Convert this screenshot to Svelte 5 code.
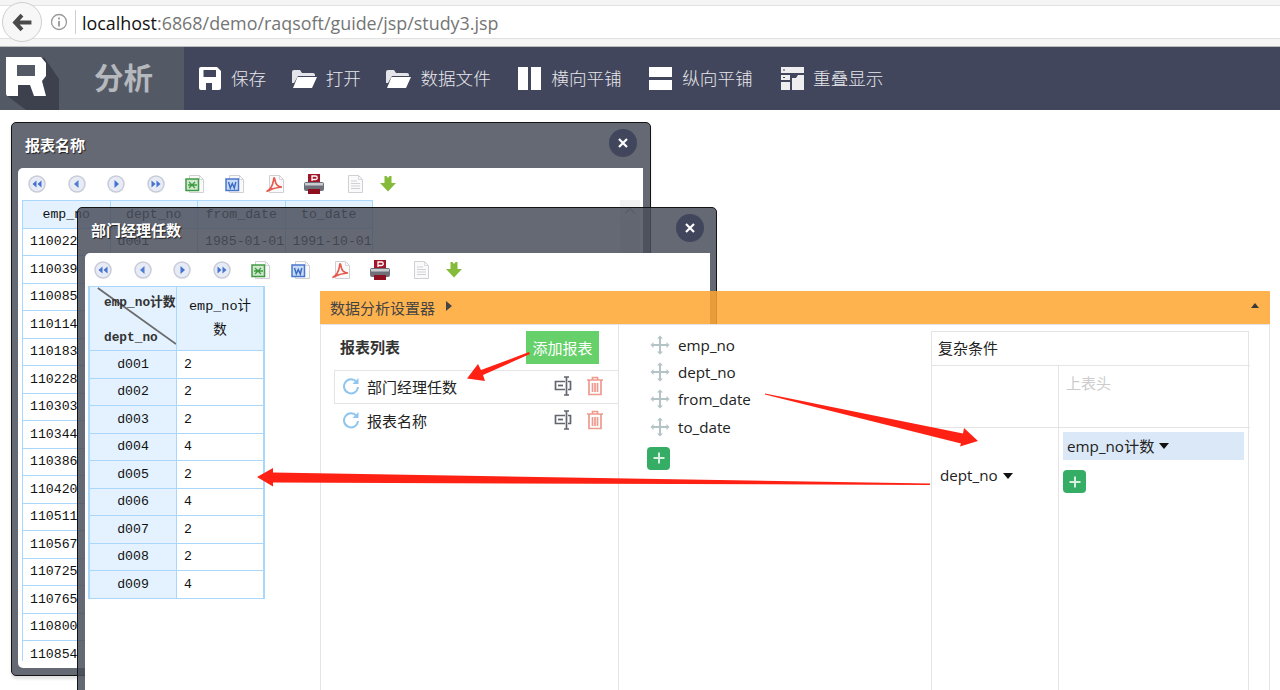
<script>
  const menu = [
    { id: 'save', w: 23, h: 23, label: '保存' },
    { id: 'folder', w: 25, h: 20, label: '打开' },
    { id: 'folder', w: 25, h: 20, label: '数据文件' },
    { id: 'cols', w: 26, h: 24, label: '横向平铺' },
    { id: 'rows', w: 26, h: 24, label: '纵向平铺' },
    { id: 'overlap', w: 26, h: 24, label: '重叠显示' }
  ];
  const empNos = ['110022','110039','110085','110114','110183','110228','110303','110344','110386','110420','110511','110567','110725','110765','110800','110854'];
  const counts = [['d001',2],['d002',2],['d003',2],['d004',4],['d005',2],['d006',4],['d007',2],['d008',2],['d009',4]];
  const fields = ['emp_no','dept_no','from_date','to_date'];
  const reports = [{ name: '部门经理任数', active: true }, { name: '报表名称', active: false }];
</script>

{#snippet roundBtn(kind)}
  <svg class="ti" viewBox="0 0 20 20">
    <circle cx="10" cy="10" r="8" fill="#e6ebf5" stroke="#c9ccd8" stroke-width="1.5"/>
    {#if kind === 'ff'}
      <path d="M9.5 6.5v7L5.5 10zM14.5 6.5v7L10.5 10z" fill="#4573cf"/>
    {:else if kind === 'f'}
      <path d="M11.5 6v8L7 10z" fill="#4f7dd2"/>
    {:else if kind === 'n'}
      <path d="M8.5 6v8l4.500-4z" fill="#4573cf"/>
    {:else}
      <path d="M5.500 6.500v7l4-3.500zM10.500 6.500v7l4-3.500z" fill="#4573cf"/>
    {/if}
  </svg>
{/snippet}

{#snippet page()}
  <path d="M4.500 1.500h10l4 4v13h-14z" fill="#fafafa" stroke="#cfcfd6"/>
  <path d="M14.500 1.500v4h4" fill="none" stroke="#d8d8de"/>
{/snippet}

{#snippet toolbar()}
  <div class="toolbar">
    {@render roundBtn('ff')}
    {@render roundBtn('f')}
    {@render roundBtn('n')}
    {@render roundBtn('nn')}
    <svg class="ti" viewBox="0 0 20 20">
      {@render page()}
      <rect x="1" y="5" width="12.500" height="11.500" fill="#cfe8cf" stroke="#3f9a42" stroke-width="1.500"/>
      <path d="M4 8l6 6M10 8l-6 6M3 11h9" stroke="#3f9a42" stroke-width="1.300"/>
    </svg>
    <svg class="ti" viewBox="0 0 20 20">
      {@render page()}
      <rect x="1" y="5" width="12.500" height="11.500" fill="#c8dcf6" stroke="#4a77cc" stroke-width="1.500"/>
      <path d="M3.500 8l1.800 6 2-4.500 2 4.500 1.500-6" fill="none" stroke="#3a68c4" stroke-width="1.400"/>
    </svg>
    <svg class="ti" viewBox="0 0 20 20">
      {@render page()}
      <path d="M1.500 17.500c3.500-1.500 6-5.500 7-11 0-3.500 1-4 1.500 0 .8 4 3 6.500 7 6.500-4 .5-8 1-11 2.500-1.500.8-3 2-4.500 2z" fill="none" stroke="#e65a50" stroke-width="1.600"/>
    </svg>
    <svg class="ti" viewBox="0 0 20 20">
      <rect x="4" y="0" width="12" height="9" fill="#a2162a"/>
      <path d="M8 7V2h3.500a1.500 1.500 0 0 1 0 3.500H8" fill="none" stroke="#fff" stroke-width="1.300"/>
      <rect x="0" y="8" width="20" height="9" rx="2" fill="#6d7078"/>
      <rect x="1" y="9" width="18" height="2.500" fill="#c8cbd0"/>
      <rect x="4" y="15" width="12" height="5" fill="#8e1020"/>
    </svg>
    <svg class="ti" viewBox="0 0 20 20">
      {@render page()}
      <path d="M7 7h6M7 9.500h9M7 12h9M7 14.500h9" stroke="#cfd0d2"/>
    </svg>
    <svg class="ti tidl" viewBox="0 0 20 20">
      <path d="M6.500 2H8.500l1.500 2 1.500-2h2v7H18l-8 8.500L2 9h4.500z" fill="#84bb3a"/>
    </svg>
  </div>
{/snippet}

{#snippet closeBtn()}
  <button class="close" aria-label="关闭">
    <svg viewBox="0 0 10 10" width="10" height="10"><path d="M1 1l8 8M9 1l-8 8" stroke="#fff" stroke-width="2.200"/></svg>
  </button>
{/snippet}

{#snippet plus()}
  <button class="plus" aria-label="添加">
    <svg viewBox="0 0 12 12" width="12" height="12"><path d="M6 0.500v11M0.500 6h11" stroke="#d6efdf" stroke-width="2"/></svg>
  </button>
{/snippet}

{#snippet moveIcon()}
  <svg class="mv" viewBox="0 0 20 20">
    <path d="M10 3v14M3 10h14" stroke="#b4c3c6" stroke-width="2"/>
    <path d="M10 0.500l3 3h-6zM10 19.500l3-3h-6zM0.500 10l3-3v6zM19.500 10l-3-3v6z" fill="#b4c3c6"/>
  </svg>
{/snippet}

{#snippet refresh()}
  <svg class="rf" viewBox="0 0 18 18">
    <path d="M14.500 5A7 7 0 1 0 16 10" fill="none" stroke="#8fc6ee" stroke-width="2"/>
    <path d="M16.500 1v6h-6z" fill="#8fc6ee"/>
  </svg>
{/snippet}

{#snippet splitIcon()}
  <svg class="ri" viewBox="0 0 18 20">
    <path d="M11 5.500H1.500v8H11M14 5.500h2.500v8H14" fill="none" stroke="#63656f" stroke-width="1.700"/>
    <path d="M4 9.500h5" stroke="#63656f" stroke-width="1.800"/>
    <path d="M10 1h5M10 19h5M12.500 1v18" fill="none" stroke="#63656f" stroke-width="1.700"/>
  </svg>
{/snippet}

{#snippet trashIcon()}
  <svg class="ri" viewBox="0 0 18 20">
    <path d="M1 4h16M6.500 3.500V1.500h5v2M3 4.500v14h12v-14M6.500 7v9M9 7v9M11.500 7v9" fill="none" stroke="#ee9a8d" stroke-width="1.700"/>
  </svg>
{/snippet}

<div class="root">
  <header class="addr">
    <div class="back">
      <svg viewBox="0 0 20 20" width="21" height="21"><path d="M9.500 3l-6.500 7 6.500 7M4 10H18.500" fill="none" stroke="#4a4a4a" stroke-width="3.800"/></svg>
    </div>
    <div class="urlbar">
      <svg class="info" viewBox="0 0 18 18" width="18" height="18">
        <circle cx="9" cy="9" r="7.500" fill="none" stroke="#9a9a9a" stroke-width="1.300"/>
        <path d="M9 8v5.500M9 4.500v2" stroke="#8a8a8a" stroke-width="1.600"/>
      </svg>
      <span class="sep"></span>
      <span class="url"><b>localhost</b>:6868/demo/raqsoft/guide/jsp/study3.jsp</span>
    </div>
  </header>

  <nav class="nav">
    <div class="brand">
      <svg class="logo" viewBox="0 0 60 63" width="60" height="63">
        <path d="M44 10L59 32V63H26L6 48z" fill="#3d414d"/>
        <path d="M6 10H41L46 16V29L42 34L46 49H34L30 38H18V49H7L6 47z" fill="#fff"/>
        <path d="M17 18H35V29H17z" fill="#545966"/>
      </svg>
      <span class="brandname">分析</span>
    </div>
    {#each menu as m}
      <div class="mitem">
        <svg width={m.w} height={m.h} viewBox={`0 0 ${m.w} ${m.h}`}>
          {#if m.id === 'save'}
            <path fill-rule="evenodd" fill="#fff" d="M0 2a2 2 0 0 1 2-2H18L22 4V21a2 2 0 0 1-2 2H2a2 2 0 0 1-2-2zM4.500 3V10H17V3zM7 16V23H13V16z"/>
          {:else if m.id === 'folder'}
            <path d="M0 3a2 2 0 0 1 2-2H8L10 4H21a2 2 0 0 1 2 2V7H6L2 14H0z" fill="#e4e5e8"/>
            <path d="M5.500 8H25L20 19H1z" fill="#fff"/>
          {:else if m.id === 'cols'}
            <rect x="2" y="0" width="10" height="23" fill="#fff"/><rect x="15" y="0" width="10" height="23" fill="#fff"/>
          {:else if m.id === 'rows'}
            <rect x="2" y="0" width="23" height="10" fill="#fff"/><rect x="2" y="13" width="23" height="10" fill="#fff"/>
          {:else}
            <path fill-rule="evenodd" fill="#eeeef0" d="M3 0H26V6H3zM5 2.500V3.500H7V2.500zM3 8H12V13H3zM5 10V11H7V10zM3 15H12V23H3zM14 11H18L20 8H26V23H14z"/>
          {/if}
        </svg>
        <span>{m.label}</span>
      </div>
    {/each}
  </nav>

  <main class="desk">
    <section class="win w1">
      <div class="wtitle"><span>报表名称</span>{@render closeBtn()}</div>
      <div class="wbody">
        {@render toolbar()}
        <div class="tclip">
          <table class="rpt">
            <thead><tr><th>emp_no</th><th>dept_no</th><th>from_date</th><th>to_date</th></tr></thead>
            <tbody>
              {#each empNos as e, i}
                <tr>
                  <td>{e}</td>
                  {#if i === 0}
                    <td>d001</td><td>1985-01-01</td><td>1991-10-01</td>
                  {:else}
                    <td></td><td></td><td></td>
                  {/if}
                </tr>
              {/each}
            </tbody>
          </table>
          <div class="sb">
            <svg viewBox="0 0 12 8" width="12" height="8"><path d="M1 6.500l5-5 5 5" fill="none" stroke="#bbb" stroke-width="1.800"/></svg>
            <div class="thumb"></div>
          </div>
        </div>
      </div>
    </section>

    <section class="win w2">
      <div class="wtitle"><span>部门经理任数</span>{@render closeBtn()}</div>
      <div class="wbody">
        {@render toolbar()}
        <table class="rpt cnt">
          <thead>
            <tr>
              <th class="diag">
                <svg viewBox="0 0 88 64" preserveAspectRatio="none"><path d="M8 1L88 58" stroke="#6a6a6a" stroke-width="1.800"/></svg>
                <span class="dtop">emp_no计数</span>
                <span class="dbot">dept_no</span>
              </th>
              <th>emp_no计<br>数</th>
            </tr>
          </thead>
          <tbody>
            {#each counts as [d, c]}
              <tr><th>{d}</th><td>{c}</td></tr>
            {/each}
          </tbody>
        </table>
      </div>
    </section>

    <section class="panel">
      <div class="phead">
        <span class="ptitle">数据分析设置器</span>
        <i class="tri-r"></i>
        <i class="tri-u"></i>
      </div>
      <div class="pbody">
        <div class="pleft">
          <div class="lhead">
            <strong>报表列表</strong>
            <button class="addbtn">添加报表</button>
          </div>
          {#each reports as r}
            <div class="litem" class:active={r.active}>
              {@render refresh()}
              <span class="lname">{r.name}</span>
              {@render splitIcon()}
              {@render trashIcon()}
            </div>
          {/each}
        </div>
        <div class="pmid">
          {#each fields as f}
            <div class="field">{@render moveIcon()}<span>{f}</span></div>
          {/each}
          <div class="midadd">{@render plus()}</div>
        </div>
        <div class="pright">
          <div class="cap">复杂条件</div>
          <div class="corner"></div>
          <div class="top">上表头</div>
          <div class="side"><span>dept_no</span><i class="tri-d"></i></div>
          <div class="meas">
            <div class="chip"><span>emp_no计数</span><i class="tri-d"></i></div>
            {@render plus()}
          </div>
        </div>
      </div>
    </section>

    <svg class="marks" viewBox="0 110 1280 580" width="1280" height="580" aria-hidden="true">
      <path d="M529 352L481 370L478 364L467 378.500L485 381L483 375L530 354z" fill="#ff2214"/>
      <path d="M765 393.500L963 433.500L964 428L978 441L960 446.500L961 443.500L765 394.500z" fill="#ff2214"/>
      <path d="M930 483.500L273 472.500L273 468L257 477L273 486.500L273 482.500L930 485z" fill="#ff2214"/>
    </svg>
  </main>
</div>

<style>
  :global(body) { margin: 0; background: #fff; }
  .root {
    width: 1280px; height: 690px; overflow: hidden;
    display: flex; flex-direction: column;
    font-family: "Open Sans", "Noto Sans CJK SC", sans-serif;
  }
  .addr {
    height: 47px; box-sizing: border-box; flex: none; position: relative;
    background: #f5f5f5; border-bottom: 1px solid #bdbdbd;
    padding: 5px 0 7px;
  }
  .back {
    position: absolute; left: 2px; top: 2px; width: 38px; height: 38px; z-index: 1;
    border: 1px solid #cfcfcf; border-radius: 50%; background: #f7f7f7;
    display: flex; align-items: center; justify-content: center;
  }
  .urlbar {
    height: 100%; box-sizing: border-box; background: #fff;
    border-top: 1px solid #e2e2e2; border-bottom: 1px solid #e2e2e2;
    display: flex; align-items: center; padding-left: 50px;
  }
  .info { flex: none; }
  .sep { width: 1px; height: 24px; background: #cfcfcf; margin: 0 6px 0 7px; flex: none; }
  .url { font-size: 17.900px; color: #757575; white-space: nowrap; position: relative; top: 1px; }
  .url b { font-weight: 400; color: #111; }

  .nav {
    height: 63px; box-sizing: border-box; flex: none; background: #41465c; display: flex; align-items: center; gap: 25.500px;
    padding-bottom: 2px;
  }
  .brand {
    width: 184px; height: 63px; align-self: flex-start; background: #545966; position: relative; flex: none;
    margin-right: -10.500px;
  }
  .logo { position: absolute; left: 0; top: 0; }
  .brandname {
    position: absolute; left: 94px; top: 11px;
    font-size: 29.500px; line-height: 36px; font-weight: 700; color: #b5b8bc;
    font-family: "Noto Sans CJK SC", sans-serif;
  }
  .mitem { display: flex; align-items: center; gap: 9px; color: #e8e8ec; font-size: 17.600px; flex: none; }
  .mitem span { font-family: "Noto Sans CJK SC", sans-serif; font-weight: 300; line-height: 24px; }
  .mitem svg { display: block; flex: none; margin-top: 2px; }

  .desk { position: relative; flex: 1; min-height: 0; }

  .win {
    position: absolute; box-sizing: border-box; width: 640px;
    background: rgba(74, 79, 92, .85);
    border: 1px solid #141414; border-radius: 5px;
    display: flex; flex-direction: column;
    padding: 0 7px 7px 6px;
  }
  .w1 { left: 11px; top: 12px; height: 554px; box-shadow: 0 3px 3px rgba(0,0,0,.12); }
  .w2 { left: 77px; top: 97px; height: 520px; padding: 0 6px 7px 7px; }
  .wtitle {
    height: 45px; box-sizing: border-box; flex: none; display: flex; align-items: center; justify-content: space-between;
    color: #fff; font-size: 15px; font-weight: 700; padding: 0 0 3px 7px;
    font-family: "Noto Sans CJK SC", sans-serif;
    text-shadow: 1px 1px 1px rgba(0,0,0,.7);
  }
  .w2 .wtitle { padding-left: 6px; }
  .close {
    width: 28px; height: 28px; padding: 0; border: none; border-radius: 50%;
    background: #41465c; display: flex; align-items: center; justify-content: center;
    margin-right: 6px; margin-top: -2px;
  }
  .wbody {
    flex: 1; min-height: 0; background: #fff; border-radius: 5px 0 0 5px;
    padding-left: 4px; display: flex; flex-direction: column;
  }
  .w2 .wbody { padding-left: 3px; }
  .toolbar {
    height: 32px; flex: none; display: flex; align-items: center; gap: 19.600px;
    padding-left: 5px;
  }
  .w2 .toolbar { height: 33px; }
  .ti { width: 20px; height: 20px; flex: none; display: block; }
  .tidl { margin-left: -5px; }

  .tclip { position: relative; flex: 1; min-height: 0; overflow: hidden; margin-bottom: 7px; }
  .sb {
    position: absolute; right: 3px; top: 0; width: 20px; height: 100%;
    background: #f1f1f1; display: flex; flex-direction: column; align-items: center; padding-top: 7px; box-sizing: border-box;
  }
  .thumb { width: 100%; height: 100%; margin-top: 6px; background: #e6e6e6; }
  .rpt {
    border-collapse: collapse; table-layout: fixed;
    font-family: "Liberation Mono", "Noto Sans CJK SC", monospace; font-size: 13.200px; color: #111;
  }
  .rpt th, .rpt td {
    border: 1px solid #a9d8fc; padding: 0 0 0 7px; height: 27.500px; box-sizing: border-box;
    font-weight: 400; overflow: hidden; white-space: nowrap;
  }
  .rpt th { background: #e3f2fe; text-align: center; padding: 0; }
  .w1 .rpt { width: 350px; }
  .w1 .rpt th, .w1 .rpt td { width: 87.500px; }
  .cnt { width: 176px; margin-top: 0; }
  .cnt th, .cnt td { width: 87.500px; }
  .cnt tr > :first-child { border-left-width: 2px; }
  .cnt tr > :last-child { border-right-width: 2px; }
  .cnt thead th { white-space: normal; line-height: 24px; height: 64px; padding: 0 4px; font-size: 13.500px; }
  .cnt .diag { position: relative; padding: 0; }
  .diag svg { position: absolute; inset: 0; width: 100%; height: 100%; }
  .dtop, .dbot { position: absolute; left: 14px; font-weight: 700; font-size: 12.800px; white-space: nowrap; color: #333; line-height: 16px; }
  .dtop { top: 8px; }
  .dbot { bottom: 4px; }

  .panel {
    position: absolute; left: 320px; top: 181px; width: 950px; height: 420px;
    display: flex; flex-direction: column;
  }
  .phead {
    height: 33px; flex: none; background: rgba(255, 166, 48, .85);
    display: flex; align-items: center; padding-left: 10px; color: #444;
    font-size: 15px; font-family: "Noto Sans CJK SC", sans-serif; position: relative;
  }
  .ptitle { line-height: 33px; }
  .tri-r {
    width: 0; height: 0; margin: -3px 0 0 11px;
    border-left: 6px solid #444; border-top: 5px solid transparent; border-bottom: 5px solid transparent;
  }
  .tri-u {
    position: absolute; right: 11px; top: 12px; width: 0; height: 0;
    border-bottom: 5px solid #3a3a3a; border-left: 4.500px solid transparent; border-right: 4.500px solid transparent;
  }
  .pbody {
    flex: 1; min-height: 0; background: #fff; box-sizing: border-box;
    border: 1px solid #e4e4e4; display: flex;
  }
  .pleft { width: 298px; flex: none; box-sizing: border-box; border-right: 1px solid #e4e4e4; padding-top: 6px; }
  .lhead { display: flex; align-items: center; justify-content: space-between; height: 33px; padding: 0 19px 0 19px; }
  .lhead strong { font-family: "Noto Sans CJK SC", sans-serif; font-size: 15px; line-height: 20px; font-weight: 700; color: #333; margin-top: -2px; }
  .addbtn {
    width: 73px; height: 33px; padding: 0; border: none; background: #66d06a; color: #fff;
    font-family: "Noto Sans CJK SC", sans-serif; font-size: 15px;
  }
  .litem {
    height: 34px; margin-left: 13px; box-sizing: border-box; display: flex; align-items: center;
    padding: 0 0 2px 7px; border: 1px solid transparent; border-right: none; margin-top: 0;
    font-family: "Noto Sans CJK SC", sans-serif; font-size: 15px; color: #222;
  }
  .litem.active { border-color: #e4e4e4; margin-top: 6px; }
  .rf { width: 18px; height: 18px; flex: none; margin-right: 7px; }
  .lname { flex: 1; }
  .ri { width: 18px; height: 20px; flex: none; margin-right: 14px; }

  .pmid { width: 312px; flex: none; padding: 6px 0 0 32px; box-sizing: border-box; }
  .field { height: 27.400px; display: flex; align-items: center; gap: 8px; font-size: 15.200px; color: #222; }
  .mv { width: 20px; height: 20px; flex: none; margin-left: -1px; }
  .midadd { margin: 6px 0 0 -4px; }
  .plus {
    width: 23px; height: 23px; border: none; padding: 0; border-radius: 4px; background: #36ad64;
    display: flex; align-items: center; justify-content: center;
  }
  .pright {
    width: 318px; flex: none; margin-top: 6px; box-sizing: border-box; height: 500px;
    display: grid; grid-template-columns: 127px 191px; grid-template-rows: 34px 62px 1fr;
    border: 1px solid #e4e4e4; font-size: 14px; color: #222;
  }
  .cap { grid-column: 1 / 3; border-bottom: 1px solid #e4e4e4; padding-left: 6px; line-height: 31px; font-family: "Noto Sans CJK SC", sans-serif; font-size: 15px; }
  .corner { border-right: 1px solid #e4e4e4; border-bottom: 1px solid #e4e4e4; }
  .top { border-bottom: 1px solid #e4e4e4; padding: 6px 0 0 7px; color: #ccc; font-size: 15px; font-family: "Noto Sans CJK SC", sans-serif; }
  .side { border-right: 1px solid #e4e4e4; padding: 37px 0 0 8px; display: flex; align-items: flex-start; gap: 5px; font-size: 15.200px; }
  .meas { padding: 4px 4px 0 4px; }
  .chip { height: 28px; width: 181px; background: #dbe8f7; display: flex; align-items: center; gap: 5px; padding: 0 0 2px 4px; box-sizing: border-box; font-size: 15.200px; margin-bottom: 10px; }
  .tri-d {
    width: 0; height: 0; flex: none;
    border-top: 6px solid #111; border-left: 5px solid transparent; border-right: 5px solid transparent;
  }
  .side .tri-d { margin-top: 8px; }
  .chip .tri-d { margin-top: 2px; }
  .marks { position: absolute; left: 0; top: 0; pointer-events: none; }
</style>
